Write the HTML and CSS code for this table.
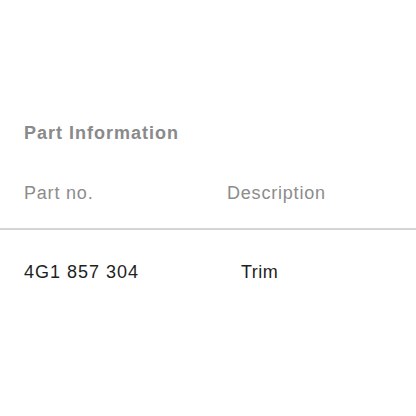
FILE: index.html
```html
<!DOCTYPE html>
<html lang="en">
<head>
    <meta charset="UTF-8">
    <meta name="viewport" content="width=device-width, initial-scale=1.0">
    <title>Part Information</title>
    <link rel="stylesheet" href="styles.css">
</head>
<body>
    <section class="part-info">
        <h3>Part Information</h3>
        <div class="row head">
            <div class="col-no">Part no.</div>
            <div class="col-desc">Description</div>
        </div>
        <div class="row data">
            <div class="col-no">4G1 857 304</div>
            <div class="col-desc">Trim</div>
        </div>
    </section>
</body>
</html>
```

FILE: styles.css
```css
body {
    margin: 0;
    background: #fff;
    font-family: "Liberation Sans", Arial, sans-serif;
}
.part-info {
    padding-top: 122px;
}
h3 {
    margin: 0 0 0 24px;
    font-size: 18px;
    font-weight: bold;
    color: #8a8a8a;
    line-height: 22px;
    letter-spacing: 1px;
}
.row {
    display: flex;
    padding-left: 24px;
}
.head {
    margin-top: 38px;
    font-size: 18px;
    color: #8c8c8c;
    line-height: 22px;
    padding-bottom: 24px;
    border-bottom: 2px solid #d4d4d4;
    letter-spacing: 0.8px;
}
.head .col-no {
    width: 203px;
}
.data {
    margin-top: 31px;
    font-size: 18px;
    color: #1e1e1e;
    line-height: 22px;
}
.data .col-no {
    width: 217px;
    letter-spacing: 1px;
}
.data .col-desc {
    letter-spacing: 0.5px;
}
```
